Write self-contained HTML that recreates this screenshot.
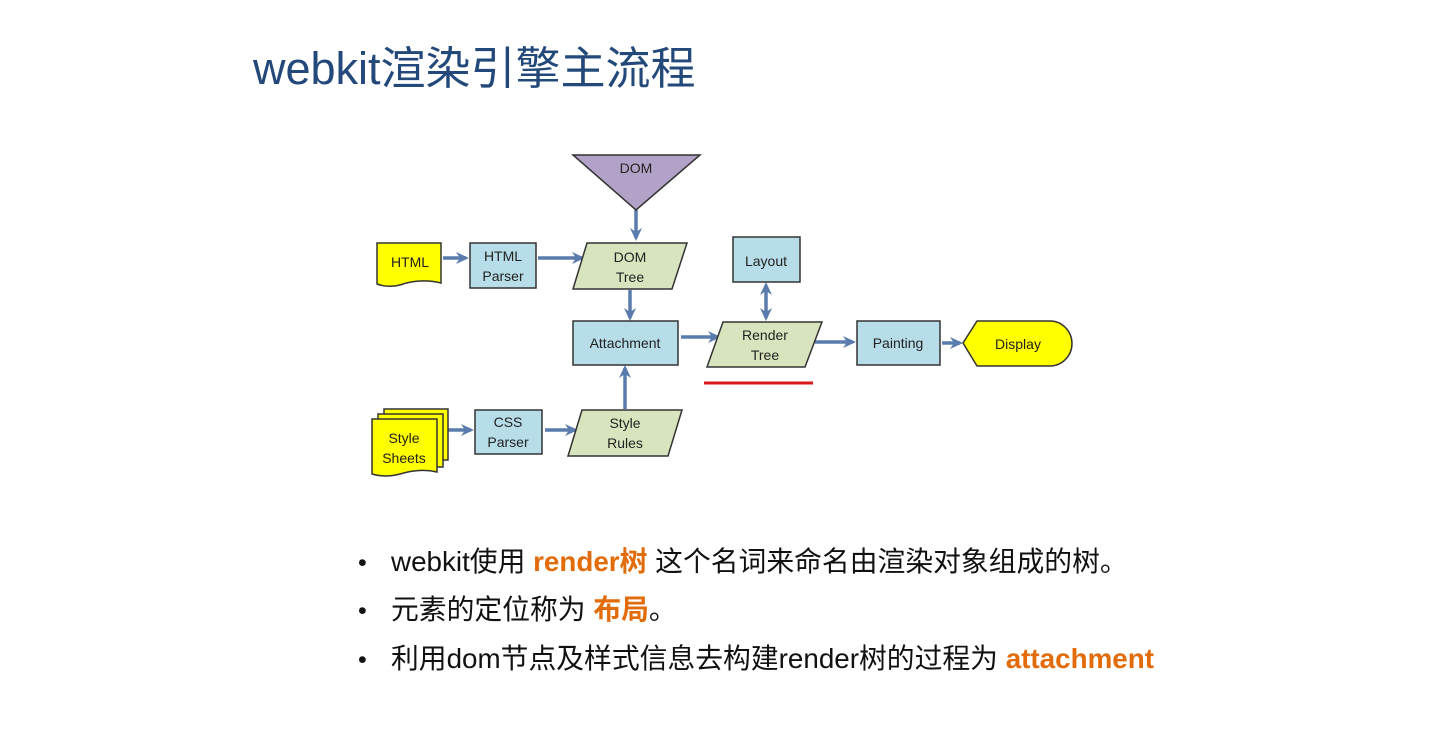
<!DOCTYPE html>
<html><head><meta charset="utf-8"><style>
body{margin:0;width:1447px;height:730px;background:#fff;overflow:hidden;position:relative;font-family:"Liberation Sans","Noto Sans CJK SC",sans-serif}
.t{position:absolute;left:253px;top:32px;font-size:45px;color:#23497a;white-space:nowrap}
.b{position:absolute;left:358px;font-size:27.8px;color:#111;white-space:nowrap}
.b span.d{display:inline-block;width:33px;font-size:25px}
.o{color:#e36c0a;font-weight:bold}
svg{position:absolute;left:0;top:0}
</style></head><body>
<div class="t">webkit渲染引擎主流程</div>
<svg width="1447" height="730" font-family="Liberation Sans,sans-serif" font-size="14" text-anchor="middle">
<defs>
<marker id="a" markerUnits="userSpaceOnUse" markerWidth="14" markerHeight="14" refX="10" refY="7" orient="auto"><path d="M0,1L13,7L0,13L4,7z" fill="#5a7bad"/></marker>
<marker id="s" markerUnits="userSpaceOnUse" markerWidth="14" markerHeight="14" refX="4" refY="7" orient="auto"><path d="M13,1L0,7L13,13L9,7z" fill="#5a7bad"/></marker>
</defs>
<g stroke="#5a7bad" stroke-width="3.5" fill="none" marker-end="url(#a)">
<line x1="636" y1="210" x2="636" y2="238"/>
<line x1="443" y1="258" x2="466" y2="258"/>
<line x1="538" y1="258" x2="582" y2="258"/>
<line x1="630" y1="290" x2="630" y2="318"/>
<line x1="681" y1="337" x2="718" y2="337"/>
<line x1="815" y1="342" x2="853" y2="342"/>
<line x1="942" y1="343" x2="960" y2="343"/>
<line x1="766" y1="286" x2="766" y2="318" marker-start="url(#s)"/>
<line x1="443" y1="430" x2="471" y2="430"/>
<line x1="545" y1="430" x2="575" y2="430"/>
<line x1="625" y1="409" x2="625" y2="368"/>
</g>
<g stroke="#333" stroke-width="1.5">
<path d="M573,155L700,155L636,210Z" fill="#b3a2c7"/>
<path d="M377,243L441,243L441,283Q420,278 400,285Q388,288 377,284Z" fill="#ffff00"/>
<rect x="470" y="243" width="66" height="45" fill="#b7dde8"/>
<path d="M587,243L687,243L672,289L573,289Z" fill="#d7e4bd"/>
<rect x="573" y="321" width="105" height="44" fill="#b7dde8"/>
<path d="M723,322L822,322L805,367L707,367Z" fill="#d7e4bd"/>
<rect x="733" y="237" width="67" height="45" fill="#b7dde8"/>
<rect x="857" y="321" width="83" height="44" fill="#b7dde8"/>
<path d="M977,321L1050,321A22,22.5 0 0 1 1050,366L977,366L963,343Z" fill="#ffff00"/>
<path d="M384,409L448,409L448,460L384,460Z" fill="#ffff00"/>
<path d="M378,414L443,414L443,467L378,467Z" fill="#ffff00"/>
<path d="M372,419L437,419L437,472Q420,468 400,474Q385,478 372,474Z" fill="#ffff00"/>
<rect x="475" y="410" width="67" height="44" fill="#b7dde8"/>
<path d="M582,410L682,410L668,456L568,456Z" fill="#d7e4bd"/>
</g>
<line x1="704" y1="383" x2="813" y2="383" stroke="#d9161c" stroke-width="3"/>
<g fill="#222">
<text x="636" y="173">DOM</text>
<text x="410" y="267">HTML</text>
<text x="503" y="261">HTML</text><text x="503" y="281">Parser</text>
<text x="630" y="262">DOM</text><text x="630" y="282">Tree</text>
<text x="625" y="348">Attachment</text>
<text x="765" y="340">Render</text><text x="765" y="360">Tree</text>
<text x="766" y="266">Layout</text>
<text x="898" y="348">Painting</text>
<text x="1018" y="349">Display</text>
<text x="404" y="443">Style</text><text x="404" y="463">Sheets</text>
<text x="508" y="427">CSS</text><text x="508" y="447">Parser</text>
<text x="625" y="428">Style</text><text x="625" y="448">Rules</text>
</g>
</svg>
<div class="b" style="top:540px"><span class="d">•</span>webkit使用 <span class="o">render树</span> 这个名词来命名由渲染对象组成的树。</div>
<div class="b" style="top:588px"><span class="d">•</span>元素的定位称为 <span class="o">布局</span>。</div>
<div class="b" style="top:637px"><span class="d">•</span>利用dom节点及样式信息去构建render树的过程为 <span class="o">attachment</span></div>
</body></html>
